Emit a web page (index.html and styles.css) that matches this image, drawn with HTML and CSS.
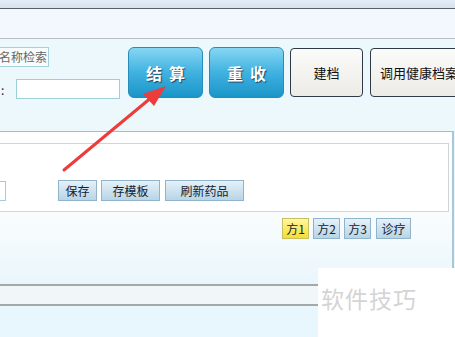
FILE: index.html
```html
<!DOCTYPE html>
<html lang="zh-CN">
<head>
    <meta charset="UTF-8">
    <title>门诊收费</title>
    <link rel="stylesheet" href="styles.css">
</head>
<body>
    <div class="page">
        <div class="topbar"></div>
        <div class="strip"></div>

        <div class="action-row">
            <div class="search-col">
                <div class="search-label">名称检索</div>
                <div class="field-row">
                    <span class="colon">:</span>
                    <input type="text" class="field">
                </div>
            </div>
            <button class="btn-big">结算</button>
            <button class="btn-big">重收</button>
            <button class="btn-plain btn-file">建档</button>
            <button class="btn-plain btn-health">调用健康档案</button>
        </div>

        <div class="panel">
            <div class="inner-box">
                <div class="tool-row">
                    <input type="text" class="cut-input">
                    <button class="btn-small btn-save">保存</button>
                    <button class="btn-small btn-tpl">存模板</button>
                    <button class="btn-small btn-refresh">刷新药品</button>
                </div>
            </div>
            <div class="tabs">
                <span class="tab active">方1</span>
                <span class="tab">方2</span>
                <span class="tab">方3</span>
                <span class="tab tab-wide">诊疗</span>
            </div>
        </div>

        <div class="status-bar"></div>

        <!-- annotation arrow over the screenshot -->
        <svg class="arrow" width="455" height="337" viewBox="0 0 455 337">
            <line x1="64" y1="170" x2="152" y2="97" stroke="#ee3b3b" stroke-width="3" stroke-linecap="round"/>
            <polygon points="166,86 143,94 154,106" fill="#ee3b3b"/>
        </svg>

        <div class="watermark">软件技巧</div>
    </div>
</body>
</html>
```

FILE: styles.css
```css
* {
    box-sizing: border-box;
}
body {
    margin: 0;
    font-family: "Noto Sans CJK SC", "Liberation Sans", sans-serif;
    font-size: 12px;
    color: #222;
    background: #e8f7fe;
    overflow: hidden;
}
.page {
    position: relative;
    width: 455px;
    height: 337px;
    overflow: hidden;
}
.topbar {
    height: 9px;
    background: linear-gradient(#e4ecf6, #d6e2f0);
    border-bottom: 1px solid #5a5f66;
}
.strip {
    height: 30px;
    background: #f2f8fd;
    border-bottom: 1px solid #b9bfc4;
}
.action-row {
    display: flex;
    align-items: flex-start;
    height: 92px;
    padding-top: 8px;
    background: #edf8fd;
}
.action-row button {
    flex-shrink: 0;
}
.search-col {
    width: 128px;
    flex-shrink: 0;
}
.search-label {
    display: inline-block;
    margin-left: -3px;
    height: 20px;
    line-height: 17px;
    padding: 0 1px;
    border: 1px solid #a8d0dc;
    color: #666;
    background: #f8fcfd;
    font-size: 12px;
}
.field-row {
    display: flex;
    align-items: center;
    margin-top: 12px;
}
.colon {
    width: 16px;
    padding-left: 1px;
    font-size: 12px;
}
.field {
    width: 104px;
    height: 20px;
    border: 1px solid #9ccfdc;
    background: #fff;
    padding: 0;
}
.btn-big {
    width: 75px;
    height: 51px;
    margin-right: 6px;
    border: 1px solid #2a8ab8;
    border-radius: 6px;
    background: linear-gradient(#86d6f3, #3fb2e0 50%, #1b95c8);
    color: #fff;
    font-family: "Noto Sans CJK SC", sans-serif;
    font-size: 16px;
    font-weight: bold;
    letter-spacing: 7px;
    padding: 0 0 0 7px;
    text-shadow: 1px 1px 1px #246;
}
.btn-plain {
    height: 49px;
    margin-top: 1px;
    border: 1px solid #2e3a48;
    border-radius: 4px;
    background: linear-gradient(#fbfbfa, #ecebe6);
    color: #111;
    font-family: "Noto Sans CJK SC", sans-serif;
    font-size: 13px;
    padding: 0;
}
.btn-file {
    width: 73px;
    margin-right: 7px;
}
.btn-health {
    width: 100px;
    text-align: left;
    padding-left: 9px;
}
.panel {
    height: 153px;
    border-top: 1px solid #90c4d4;
    border-right: 2px solid #a8c8d8;
    margin-right: 1px;
    background: linear-gradient(#fff, #fbfdfe 50%, #eaf6fc);
    padding-top: 11px;
}
.inner-box {
    margin-left: -2px;
    width: 451px;
    height: 69px;
    border: 1px solid #cfd4d6;
    background: #fff;
    padding-top: 36px;
}
.tool-row {
    display: flex;
    align-items: center;
}
.cut-input {
    width: 7px;
    height: 20px;
    border: 1px solid #9ccfdc;
    margin-right: 52px;
    padding: 0;
}
.btn-small {
    flex-shrink: 0;
    height: 21px;
    padding: 0;
    border: 1px solid #8fb4cc;
    background: linear-gradient(#e6f1f9, #b8d4e6);
    color: #123;
    font-family: "Noto Sans CJK SC", sans-serif;
    font-size: 12px;
    margin-right: 4px;
}
.btn-save {
    width: 39px;
}
.btn-tpl {
    width: 59px;
    margin-right: 5px;
}
.btn-refresh {
    width: 79px;
}
.tabs {
    display: flex;
    gap: 4px;
    margin-top: 6px;
    padding-left: 282px;
}
.tab {
    width: 27px;
    height: 21px;
    line-height: 19px;
    text-align: center;
    border: 1px solid #8fb4cc;
    background: linear-gradient(#e6f1f9, #b8d4e6);
    font-size: 12px;
    color: #123;
}
.tab.active {
    background: linear-gradient(#fff7a0, #f6de2e);
    border-color: #c8c060;
}
.tab-wide {
    width: 35px;
    margin-left: 1px;
}
.status-bar {
    height: 22px;
    border-top: 2px solid #a4a8aa;
    border-bottom: 2px solid #a4a8aa;
    background: #f1f6f9;
}
.arrow {
    position: absolute;
    left: 0;
    top: 0;
    pointer-events: none;
}
.watermark {
    position: absolute;
    left: 318px;
    top: 268px;
    width: 137px;
    height: 69px;
    background: #fff;
    color: #d4d4d4;
    font-size: 23px;
    line-height: 60px;
    padding-left: 3px;
    letter-spacing: 1px;
}
```
